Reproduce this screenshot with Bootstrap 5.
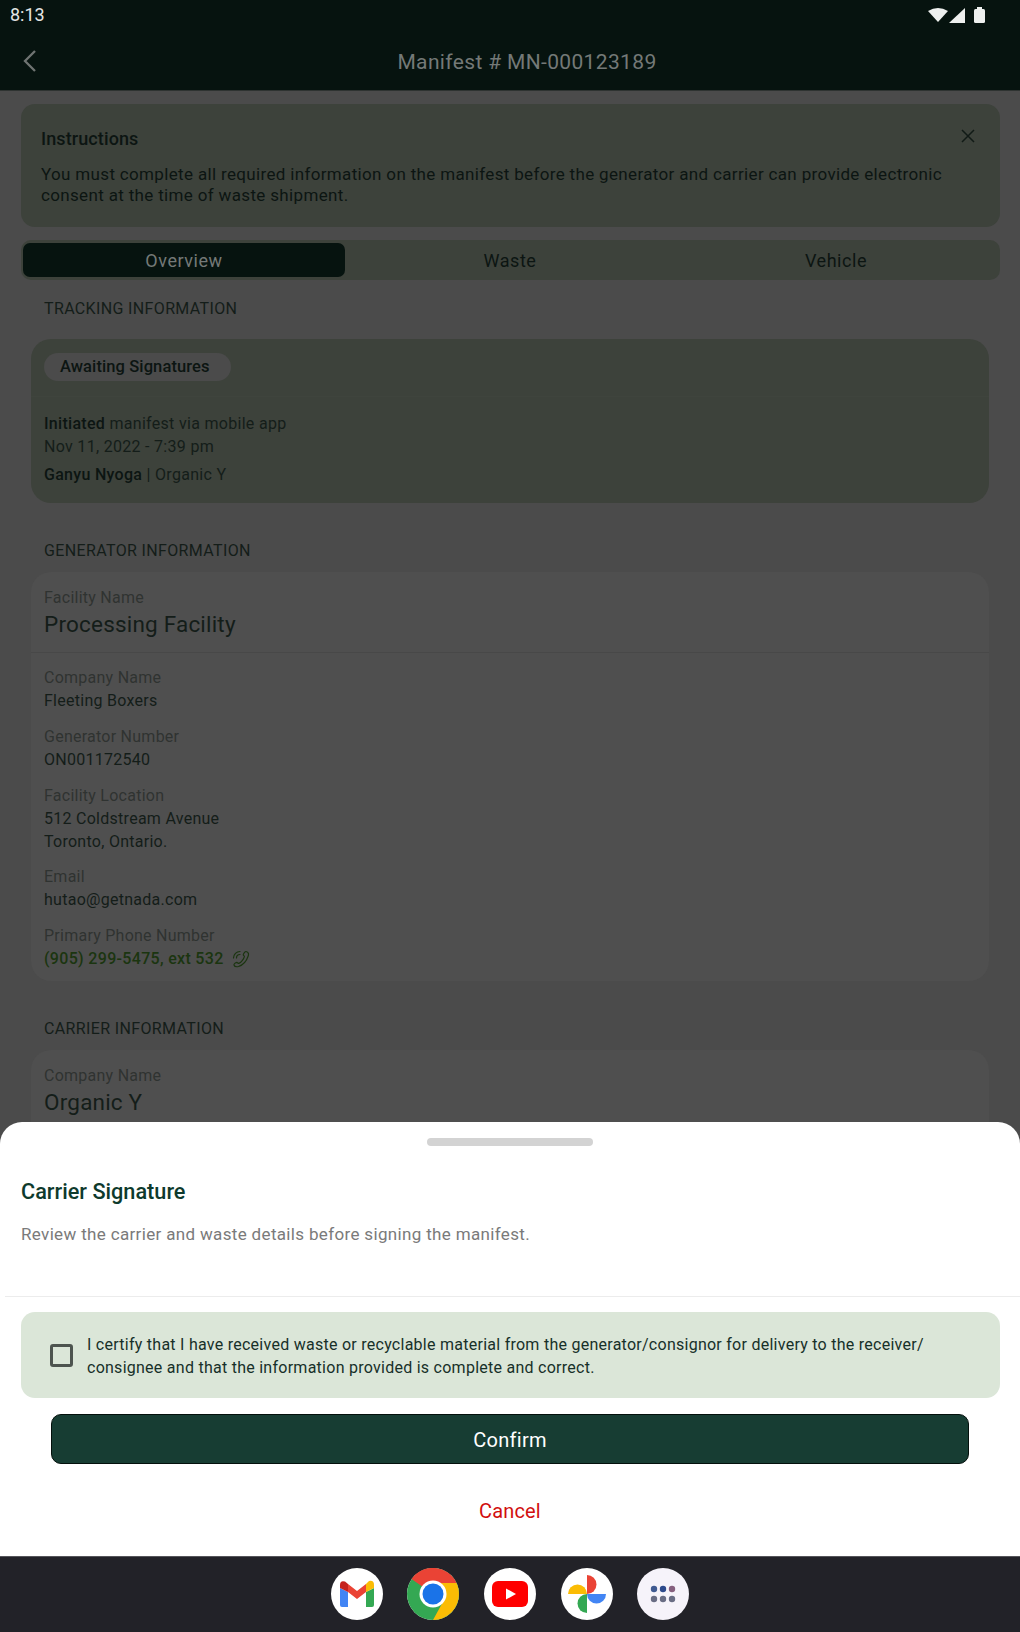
<!DOCTYPE html>
<html lang="en">
<head>
  <meta charset="UTF-8">
  <title>Manifest MN-000123189</title>
  <link href="https://cdn.jsdelivr.net/npm/bootstrap@5.3.0/dist/css/bootstrap.min.css" rel="stylesheet">
  <style>
    html, body { margin: 0; background: #4b4b4b; }
    body { font-family: Roboto, "Liberation Sans", sans-serif; font-size: 16px; color: #101a16; }

    .screen { width: 1020px; height: 1632px; overflow: hidden; position: relative; }
    .page-area { height: 1556px; overflow: hidden; background: #4b4b4b; }

    .status-strip { height: 30px; background: #06130f; color: #e4e6e5; padding: 0 32px 0 10px; }
    .status-strip .clock { font-size: 18px; line-height: 36px; }
    .top-bar { height: 61px; background: #06130f; color: #747977; font-size: 21px; letter-spacing: .35px; position: relative; border-bottom: 1px solid #2e3331; padding: 5px 0 0 34px; }
    .back-arrow { position: absolute; left: 22px; top: 19px; }

    .notice { margin: 13px 20px 0 21px; height: 123px; background: #3d423b; border-radius: 14px; padding: 23px 20px 0; position: relative; line-height: 21px; font-size: 17px; letter-spacing: .34px; color: #0c1512; }
    .notice-title { font-size: 18px; font-weight: 500; line-height: 24px; margin-bottom: 13px; letter-spacing: .1px; }
    .notice-close { position: absolute; right: 25px; top: 25px; }

    .tab-strip { margin: 13px 20px 0 21px; height: 40px; background: #3d423b; border-radius: 10px; padding: 3px 2px; }
    .tab-item { text-align: center; font-size: 18px; line-height: 36px; letter-spacing: .55px; color: #0c1512; width: 322px; }
    .tab-item.wide-tab { width: 330px; }
    .tab-item.is-on { background: #06130f; color: #747977; border-radius: 7px; line-height: 34px; padding-top: 1px; height: 34px; }

    .sect-label { margin: 0 0 0 44px; font-size: 16px; line-height: 20px; color: #141d19; letter-spacing: .36px; }
    .track-box { margin: 20px 31px 0; height: 164px; background: #3d423b; border-radius: 20px; padding: 14px 13px 0; }
    .state-pill { width: 187px; height: 28px; line-height: 28px; padding-left: 16px; background: #4b4b4b; border-radius: 14px; font-size: 16.5px; font-weight: 500; letter-spacing: .1px; color: #0c1512; }
    .track-rule { border-top: 1px solid #3f443d; margin: 15px -13px 15px; }
    .track-line { line-height: 23px; font-size: 16px; color: #141d19; letter-spacing: .3px; }
    .track-line b { font-weight: 500; color: #0c1512; }

    .info-box { margin: 11px 31px 0; background: #4f4f4f; border-radius: 20px; padding: 14px 13px 0; }
    .field-label { font-size: 16px; line-height: 23px; color: #2f3331; letter-spacing: .25px; }
    .field-value { font-size: 16px; line-height: 23px; color: #141d19; letter-spacing: .27px; }
    .field-big { font-size: 22.5px; line-height: 31px; color: #141d19; letter-spacing: .2px; }
    .field-rule { border-top: 1px solid #484848; margin: 12px -13px 13px; }
    .field-gap { margin-top: 12.75px; }
    .phone-link { color: #1b3510; font-weight: 500; letter-spacing: .32px; }

    .sheet { position: absolute; left: 0; right: 0; top: 1122px; height: 434px; background: #fff; border-radius: 22px 22px 0 0; }
    .grab-bar { width: 166px; height: 8px; border-radius: 4px; background: #d3d3d3; margin: 16px auto 0; }
    .sheet-title { margin: 33px 0 0 21px; font-size: 21.7px; font-weight: 500; line-height: 26px; color: #0e3a2d; }
    .sheet-sub { margin: 17px 0 0 21px; font-size: 17px; line-height: 24px; color: #7a7a7a; letter-spacing: .34px; }
    .sheet-rule { border-top: 1px solid #ececec; margin: 50px 0 0 5px; }
    .certify-box { margin: 15px 20px 0 21px; height: 86px; background: #dbe6d8; border-radius: 14px; padding-left: 29px; }
    .tick-box { width: 23px; height: 23px; flex: none; border: 3px solid #4d544f; border-radius: 3px; margin-right: 14px; }
    .certify-text { font-size: 16px; line-height: 23px; color: #173029; letter-spacing: .26px; padding-top: 2px; }
    .confirm-btn { display: block; margin: 16px 51px 0; width: 918px; height: 50px; background: #173d33; border: 1px solid #04100c; border-radius: 10px; color: #fff; font-size: 20px; line-height: 48px; letter-spacing: .3px; padding: 1px 0 0; }
    .confirm-btn:hover { background: #173d33; color: #fff; }
    .cancel-btn { display: block; width: 100%; margin-top: 22px; color: #d10f0f; font-size: 20px; letter-spacing: .15px; line-height: 50px; height: 50px; padding: 0; border: 0; }
    .cancel-btn:hover { color: #d10f0f; }

    .dock { height: 76px; background: #222228; border-top: 1px solid #55555a; gap: 24.6px; padding-bottom: 2px; }
    .dock-icon { width: 52px; height: 52px; border-radius: 50%; background: #fff; }
    .dock-grid { background: #f6f3fa; }
  </style>
</head>
<body>
<div class="screen">
  <div class="page-area">

    <div class="status-strip d-flex justify-content-between align-items-center">
      <span class="clock">8:13</span>
      <svg width="60" height="18" viewBox="0 0 60 18">
        <path d="M0 5 Q10 -1 20 5 L10 16 Z" fill="#eef0ef"/>
        <path d="M37 2 V17 H21 Z" fill="#eef0ef"/>
        <rect x="46" y="3" width="11" height="14" rx="1.5" fill="#eef0ef"/>
        <rect x="49" y="1" width="5" height="3" fill="#eef0ef"/>
      </svg>
    </div>

    <div class="top-bar d-flex align-items-center justify-content-center">
      <svg class="back-arrow" width="15" height="24" viewBox="0 0 15 24"><path d="M13 2 L3 12 L13 22" fill="none" stroke="#6f7472" stroke-width="2.3"/></svg>
      <span>Manifest # MN-000123189</span>
    </div>

    <div class="notice">
      <div class="notice-title">Instructions</div>
      <svg class="notice-close" width="14" height="14" viewBox="0 0 14 14"><path d="M1 1 L13 13 M13 1 L1 13" stroke="#111a16" stroke-width="1.5"/></svg>
      <div>You must complete all required information on the manifest before the generator and carrier can provide electronic consent at the time of waste shipment.</div>
    </div>

    <div class="tab-strip d-flex">
      <div class="tab-item is-on">Overview</div>
      <div class="tab-item wide-tab">Waste</div>
      <div class="tab-item">Vehicle</div>
    </div>

    <p class="sect-label" style="margin-top:19px">TRACKING INFORMATION</p>

    <div class="track-box">
      <div class="state-pill">Awaiting Signatures</div>
      <div class="track-rule"></div>
      <div class="track-line"><b>Initiated</b> manifest via mobile app</div>
      <div class="track-line">Nov 11, 2022 - 7:39 pm</div>
      <div class="track-line" style="margin-top:5px"><b>Ganyu Nyoga</b> | Organic Y</div>
    </div>

    <p class="sect-label" style="margin-top:38px">GENERATOR INFORMATION</p>

    <div class="info-box" style="height:409px">
      <div class="field-label">Facility Name</div>
      <div class="field-big">Processing Facility</div>
      <div class="field-rule"></div>
      <div class="field-label">Company Name</div>
      <div class="field-value">Fleeting Boxers</div>
      <div class="field-label field-gap">Generator Number</div>
      <div class="field-value">ON001172540</div>
      <div class="field-label field-gap">Facility Location</div>
      <div class="field-value">512 Coldstream Avenue<br>Toronto, Ontario.</div>
      <div class="field-label field-gap">Email</div>
      <div class="field-value">hutao@getnada.com</div>
      <div class="field-label field-gap">Primary Phone Number</div>
      <div class="field-value phone-link d-flex align-items-center">(905) 299-5475, ext 532
        <svg class="ms-2" width="18" height="18" viewBox="0 0 18 18" fill="none" stroke="#1b3510" stroke-width="1.2" stroke-linecap="round">
          <path d="M14 1.5 C16.5 2 17 4 16 6.5 C14.5 11 11 15 6.5 16.5 C4.5 17 2.5 16.5 2 15 C1.8 14 3.5 12.6 4.7 12.4 C5.6 12.3 6 13.6 6.8 13.4 C9 12.4 11.8 9 12.4 6.6 C12.5 5.8 11.2 5.4 11.3 4.6 C11.5 3.4 13 1.4 14 1.5 Z"/>
          <path d="M1.5 8 C1.5 4.5 4.5 1.5 8 1.5"/>
          <path d="M4.5 8 C4.5 6 6 4.5 8 4.5"/>
        </svg>
      </div>
    </div>

    <p class="sect-label" style="margin-top:38px">CARRIER INFORMATION</p>

    <div class="info-box" style="height:200px">
      <div class="field-label">Company Name</div>
      <div class="field-big">Organic Y</div>
    </div>
  </div>

  <div class="sheet">
    <div class="grab-bar"></div>
    <div class="sheet-title">Carrier Signature</div>
    <div class="sheet-sub">Review the carrier and waste details before signing the manifest.</div>
    <div class="sheet-rule"></div>
    <div class="certify-box d-flex align-items-center">
      <div class="tick-box"></div>
      <div class="certify-text">I certify that I have received waste or recyclable material from the generator/consignor for delivery to the receiver/<br>consignee and that the information provided is complete and correct.</div>
    </div>
    <button type="button" class="btn confirm-btn">Confirm</button>
    <button type="button" class="btn cancel-btn">Cancel</button>
  </div>

  <div class="dock d-flex justify-content-center align-items-center">
    <div class="dock-icon d-flex align-items-center justify-content-center">
      <svg width="36" height="28" viewBox="0 0 36 28">
        <path d="M1 8 V25 Q1 27 3 27 H9 V12 Z" fill="#4285f4"/>
        <path d="M27 12 V27 H33 Q35 27 35 25 V8 Z" fill="#34a853"/>
        <path d="M27 4 V12 L35 8 V5 Q35 0 30 1 Z" fill="#fbbc04"/>
        <path d="M1 8 L9 12 V4 L6 1.500 Q1 0 1 5 Z" fill="#c5221f"/>
        <path d="M9 4 L18 11 L27 4 V12 L18 19 L9 12 Z" fill="#ea4335"/>
      </svg>
    </div>
    <div class="dock-icon d-flex align-items-center justify-content-center">
      <svg width="52" height="52" viewBox="0 0 52 52">
        <circle cx="26" cy="26" r="26" fill="#34a853"/>
        <path d="M26 26 L4.500 11 A26 26 0 0 1 49.500 15 L26 15 Z" fill="#ea4335"/>
        <path d="M26 15 H49.500 A26 26 0 0 1 26 52 L37 32 Z" fill="#fbbc04"/>
        <circle cx="26" cy="26" r="13.500" fill="#fff"/>
        <circle cx="26" cy="26" r="10.500" fill="#1a73e8"/>
      </svg>
    </div>
    <div class="dock-icon d-flex align-items-center justify-content-center">
      <svg width="36" height="26" viewBox="0 0 36 26">
        <rect width="36" height="26" rx="6" fill="#ff0000"/>
        <path d="M14 7.500 L24 13 L14 18.500 Z" fill="#fff"/>
      </svg>
    </div>
    <div class="dock-icon d-flex align-items-center justify-content-center">
      <svg width="38" height="38" viewBox="0 0 38 38">
        <path d="M19 19 V0 A9.500 9.500 0 0 1 19 19 Z" fill="#ea4335"/>
        <path d="M19 19 H38 A9.500 9.500 0 0 1 19 19 Z" fill="#4285f4"/>
        <path d="M19 19 V38 A9.500 9.500 0 0 1 19 19 Z" fill="#34a853"/>
        <path d="M19 19 H0 A9.500 9.500 0 0 1 19 19 Z" fill="#fbbc04"/>
      </svg>
    </div>
    <div class="dock-icon dock-grid d-flex align-items-center justify-content-center">
      <svg width="26" height="20" viewBox="0 0 26 20">
        <circle cx="4" cy="5" r="3.200" fill="#3f5a91"/><circle cx="13" cy="5" r="3.200" fill="#2d4a8c"/><circle cx="22" cy="5" r="3.200" fill="#86607f"/>
        <circle cx="4" cy="15" r="3.200" fill="#696d84"/><circle cx="13" cy="15" r="3.200" fill="#696d84"/><circle cx="22" cy="15" r="3.200" fill="#696d84"/>
      </svg>
    </div>
  </div>
</div>
<script src="https://cdn.jsdelivr.net/npm/bootstrap@5.3.0/dist/js/bootstrap.bundle.min.js"></script>
</body>
</html>
